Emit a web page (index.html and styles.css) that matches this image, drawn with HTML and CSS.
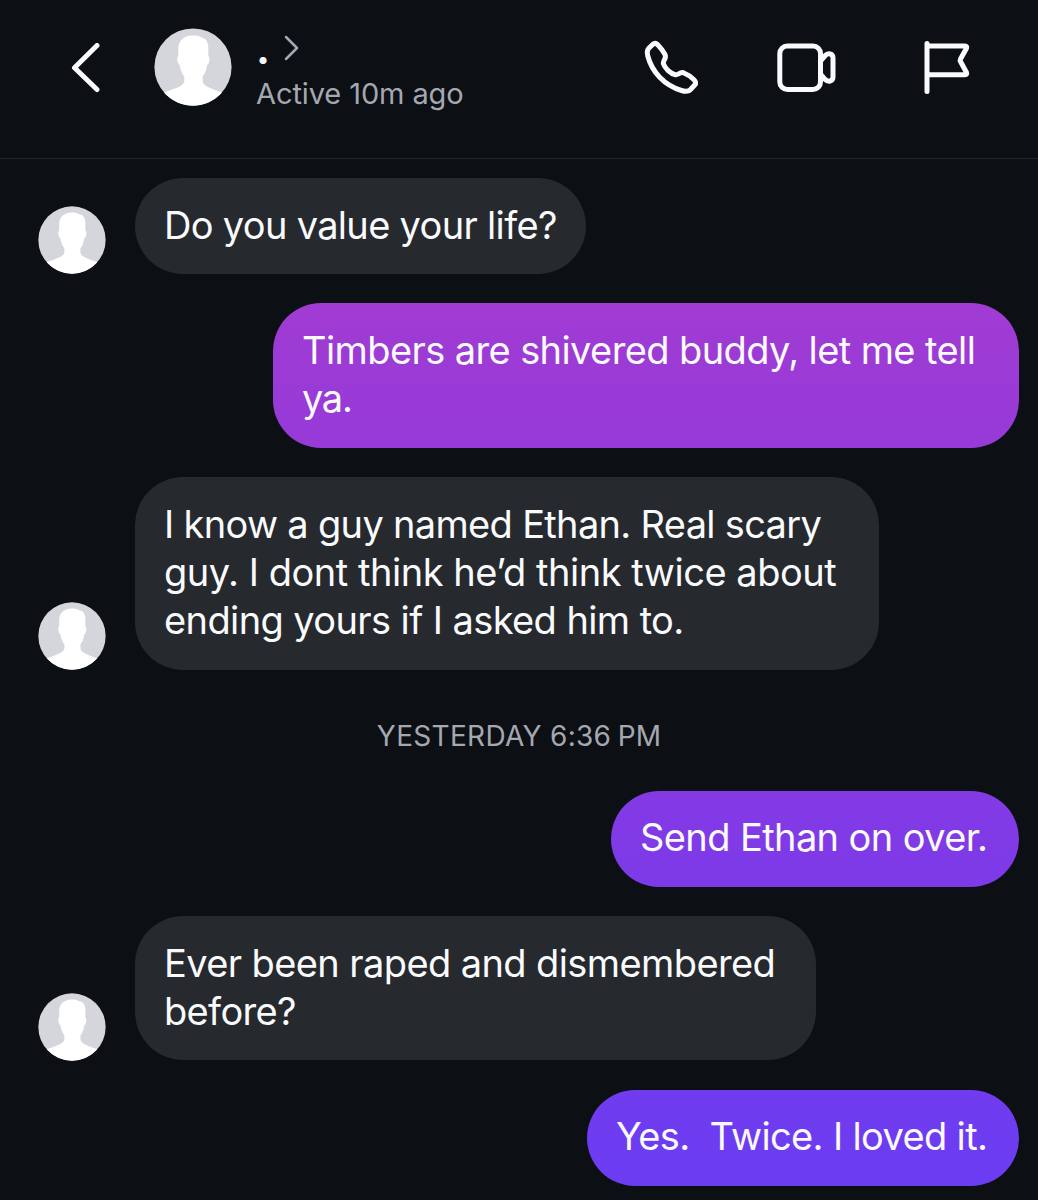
FILE: index.html
```html
<!DOCTYPE html>
<html lang="en">
<head>
<meta charset="utf-8">
<title>Chat</title>
<link rel="stylesheet" href="styles.css">
</head>
<body>
<svg class="defs" aria-hidden="true">
  <symbol id="person" viewBox="0 0 78 78">
    <circle cx="39" cy="39" r="38.6" fill="#d5d5dc"/>
    <path fill="#fff" d="M39 7.500C30 7 24.500 13 24.300 20L24.300 28C22.500 29 23 35 25.500 37C26.500 42 28 46 30.300 48.500V53C30 58 22 60 10 64.500A38.600 38.600 0 0 0 68 64.500C56 60 48.900 58 48.700 53V48.500C51 46 52.300 42 53.200 37C56 35 56 29 54.300 28V19C54 13 51 9.500 47.500 9.500C45 7.800 42 7.300 39 7.500Z"/>
  </symbol>
</svg>
<header class="header">
  <svg class="back" viewBox="0 0 30 50"><path d="M26 2.500L3.500 24.800L26 46.500"/></svg>
  <svg class="avatar avatar-large"><use href="#person"/></svg>
  <div class="contact">
    <div class="name"><span>.</span><svg class="chevron" viewBox="0 0 16 26"><path d="M2 2L13 13L2 24"/></svg></div>
    <div class="status">Active 10m ago</div>
  </div>
  <nav class="actions">
    <svg class="icon" viewBox="0 0 60 60"><path d="M11.700 6.500C13.200 5.200 15 5.200 16.500 6.500C19.500 9.500 22 13 24 16.500C26 20.500 21.800 22 22.300 25.500C24 30.500 29.500 35.800 34.500 36.800C37.500 37.300 38.500 33.700 42.500 34.700C46.500 36.300 50 38.800 53 41.700C54.800 43.500 55 45.500 53.700 47L50 51C48 53.500 44.500 53.700 40.500 52.500C23 47 11 34 6.800 18C5.900 14.500 6 12 8 10Z"/></svg>
    <svg class="icon" viewBox="0 0 60 60"><rect x="2.800" y="8" width="40.700" height="43.500" rx="7.500"/><path d="M43.500 23L48 17.800C51 14.500 56 15.500 56 20V39C56 43.500 51 44.500 48 41.300L43.500 36"/></svg>
    <svg class="icon" viewBox="0 0 60 60"><path d="M14 5.500V53.500M14 8H52C53.500 8 54 9 53.500 10.200L47.500 21C47 22 47 22.700 47.500 23.500L53.500 34.500C54 36 53.500 36.800 52 36.800H14"/></svg>
  </nav>
</header>
<main class="thread">
  <section class="message incoming">
    <svg class="avatar"><use href="#person"/></svg>
    <p class="bubble b1"><span class="l1">Do you value your life?</span></p>
  </section>
  <section class="message outgoing">
    <p class="bubble b2"><span>Timbers are shivered buddy, let me tell</span><span class="l3">ya.</span></p>
  </section>
  <section class="message incoming">
    <svg class="avatar"><use href="#person"/></svg>
    <p class="bubble b3"><span class="l4">I know a guy named Ethan. Real scary</span><span class="l5">guy. I dont think he’d think twice about</span><span>ending yours if I asked him to.</span></p>
  </section>
  <time class="date">YESTERDAY 6:36<span class="thin"> </span>PM</time>
  <section class="message outgoing">
    <p class="bubble b4"><span>Send Ethan on over.</span></p>
  </section>
  <section class="message incoming">
    <svg class="avatar"><use href="#person"/></svg>
    <p class="bubble b5"><span>Ever been raped and dismembered</span><span class="l9">before?</span></p>
  </section>
  <section class="message outgoing">
    <p class="bubble b6"><span class="l10">Yes.  Twice. I loved it.</span></p>
  </section>
</main>
</body>
</html>
```
FILE: styles.css
```css
* { box-sizing: border-box; }
body { margin: 0; width: 1038px; height: 1200px; overflow: hidden; background: #0c0f14; color: #f9fafc; font-family: Inter, "Liberation Sans", sans-serif; }
.defs { position: absolute; width: 0; height: 0; }
.header { display: flex; height: 159px; padding-left: 71px; border-bottom: 1px solid #23262b; }
.header svg path, .header svg rect { fill: none; stroke: #f9fafc; stroke-width: 5; stroke-linecap: round; stroke-linejoin: round; }
.back { width: 30px; height: 50px; margin-top: 43px; }
.avatar { flex: none; width: 68px; height: 68px; }
.avatar-large { width: 78px; height: 78px; margin: 28.300px 0 0 53px; }
.contact { width: 301px; margin: 26px 0 0 24px; }
.name { display: flex; height: 48px; font-size: 42px; font-weight: 700; line-height: 45px; }
.name span { width: 12px; }
.name .chevron { width: 16px; height: 26px; margin: 9px 0 0 16px; }
.header .chevron path { stroke: #a5a7b1; stroke-width: 2.5; }
.status { height: 40px; color: #a5a7b1; font-size: 29px; line-height: 40px; letter-spacing: -.1px; white-space: pre; }
.actions { display: flex; gap: 76px; margin: 38px 0 0 84px; }
.icon { width: 60px; height: 60px; }
.thread { display: flex; flex-direction: column; gap: 29.200px; padding: 19px 19px 0 38.300px; }
.message { display: flex; align-items: flex-end; gap: 28.700px; }
.incoming .avatar { margin-bottom: -.2px; }
.outgoing { justify-content: flex-end; }
.bubble { margin: 0; padding: 22.600px 29px 25.400px; border-radius: 48px; background: #26292e; font-size: 38px; line-height: 48.200px; letter-spacing: -.6px; white-space: pre; }
.bubble span { display: block; }
.bubble .l1 { letter-spacing: -.68px; }
.bubble .l3 { letter-spacing: -1.300px; }
.bubble .l4 { letter-spacing: -.68px; }
.bubble .l5 { letter-spacing: -.47px; }
.bubble .l9, .bubble .l10 { letter-spacing: -.65px; }
.b1 { width: 451px; } .b2 { width: 746px; background: linear-gradient(#a13bd3, #963ad9); }
.b3 { width: 744px; } .b4 { width: 408px; background: linear-gradient(#833ae4, #7d3ae8); }
.b5 { width: 681px; } .b6 { width: 432px; background: linear-gradient(#713bef, #6b3df2); }
.date { height: 62.800px; margin-left: -19px; color: #a5a7b1; font-size: 28px; line-height: 74px; letter-spacing: .3px; text-align: center; white-space: pre; }
.thin { letter-spacing: -1.500px; }
```
